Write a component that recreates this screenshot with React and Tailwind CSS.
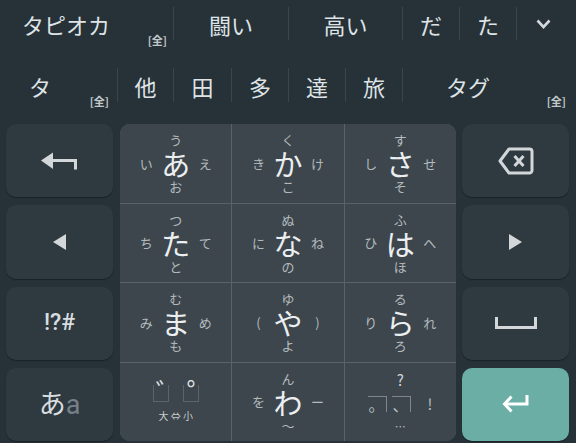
import React from "react";

const FONT = "font-['Noto_Sans_CJK_JP','Noto_Sans',sans-serif]";

const Sep = ({ className = "" }) => <div className={`w-px bg-[#3a464d] ${className}`} />;

const Zen = ({ className = "" }) => (
    <span className={`text-[11px] leading-[13px] font-bold text-[#c3c8cb] ${className}`}>[全]</span>
);

// one flick key of the 12-key pad
const Flick = ({ top, left, main, right, bottom }) => (
    <div className="flex flex-col items-center justify-center bg-[#3d464d]">
        <span className="text-[13px] leading-[15px] text-[#b3babe]">{top}</span>
        <div className="flex items-center my-[1px]">
            <span className="w-[14px] text-center text-[13px] leading-[15px] text-[#b3babe]">{left}</span>
            <span className="mx-[8px] text-[29px] leading-[30px] font-normal text-[#eceff1]">{main}</span>
            <span className="w-[14px] text-center text-[13px] leading-[15px] text-[#b3babe]">{right}</span>
        </div>
        <span className="text-[13px] leading-[15px] text-[#b3babe]">{bottom}</span>
    </div>
);

const SideKey = ({ children, className = "bg-[#2f3a40]" }) => (
    <div className={`flex-1 flex items-center justify-center rounded-[10px] shadow-[0_1px_1px_rgba(0,0,0,0.35)] ${className}`}>
        {children}
    </div>
);

const App = () => {
    return (
        <div className={`w-[576px] h-[443px] bg-[#263238] overflow-hidden ${FONT}`}>

            {/* candidate row 1 */}
            <div className="flex h-[48px] text-[22px] text-[#dfe3e6]">
                <div className="w-[173px] flex items-center">
                    <span className="ml-[22px] leading-none">タピオカ</span>
                    <Zen className="ml-auto mr-[6px] self-end mb-[1px]" />
                </div>
                <Sep className="my-[7px] mb-[8px]" />
                <div className="w-[114px] flex items-center justify-center">闘い</div>
                <Sep className="my-[7px] mb-[8px]" />
                <div className="w-[113px] flex items-center justify-center">高い</div>
                <Sep className="my-[7px] mb-[8px]" />
                <div className="w-[56px] flex items-center justify-center">だ</div>
                <Sep className="my-[7px] mb-[8px]" />
                <div className="w-[56px] flex items-center justify-center">た</div>
                <Sep className="my-[7px] mb-[8px]" />
                <div className="flex-1 flex items-center justify-center pr-[6px]">
                    <svg width="15" height="10" viewBox="0 0 15 10">
                        <polyline points="1.5,1.5 7.5,8 13.5,1.5" fill="none" stroke="#d3d7da" strokeWidth="2.6" />
                    </svg>
                </div>
            </div>

            {/* candidate row 2 */}
            <div className="flex h-[76px] text-[22px] text-[#dfe3e6]">
                <div className="w-[117px] flex items-center">
                    <span className="ml-[29px] leading-none">タ</span>
                    <Zen className="ml-auto mr-[8px] self-end mb-[16px]" />
                </div>
                <Sep className="mt-[20px] mb-[22px]" />
                <div className="w-[55px] flex items-center justify-center">他</div>
                <Sep className="mt-[20px] mb-[22px]" />
                <div className="w-[57px] flex items-center justify-center">田</div>
                <Sep className="mt-[20px] mb-[22px]" />
                <div className="w-[56px] flex items-center justify-center">多</div>
                <Sep className="mt-[20px] mb-[22px]" />
                <div className="w-[56px] flex items-center justify-center">達</div>
                <Sep className="mt-[20px] mb-[22px]" />
                <div className="w-[56px] flex items-center justify-center">旅</div>
                <Sep className="mt-[20px] mb-[22px]" />
                <div className="flex-1 flex items-center">
                    <span className="ml-[43px] leading-none">タグ</span>
                    <Zen className="ml-auto mr-[10px] self-end mb-[16px]" />
                </div>
            </div>

            {/* keyboard */}
            <div className="flex h-[317px] px-[6px]">

                {/* left column */}
                <div className="w-[107px] flex flex-col gap-[8px]">
                    <SideKey>
                        <svg width="37" height="18" viewBox="0 0 37 18">
                            <polygon points="0,8.5 12,0.5 12,17" fill="#d3d7da" />
                            <path d="M11 8.5 H34.5 V17.5" fill="none" stroke="#d3d7da" strokeWidth="3" />
                        </svg>
                    </SideKey>
                    <SideKey>
                        <svg width="14" height="16" viewBox="0 0 14 16">
                            <polygon points="0,8 13,0 13,16" fill="#d3d7da" />
                        </svg>
                    </SideKey>
                    <SideKey>
                        <span className="text-[23px] font-medium text-[#d9dde0] font-['Roboto',sans-serif]">!?#</span>
                    </SideKey>
                    <SideKey>
                        <span className="text-[27px] leading-none text-[#d9dde0]">
                            あ<span className="text-[#75808a] font-['Roboto',sans-serif]">a</span>
                        </span>
                    </SideKey>
                </div>

                {/* flick pad */}
                <div className="w-[336px] ml-[7px] grid grid-cols-3 grid-rows-4 gap-px bg-[#59626a] rounded-[10px] overflow-hidden">
                    <Flick top="う" left="い" main="あ" right="え" bottom="お" />
                    <Flick top="く" left="き" main="か" right="け" bottom="こ" />
                    <Flick top="す" left="し" main="さ" right="せ" bottom="そ" />
                    <Flick top="つ" left="ち" main="た" right="て" bottom="と" />
                    <Flick top="ぬ" left="に" main="な" right="ね" bottom="の" />
                    <Flick top="ふ" left="ひ" main="は" right="へ" bottom="ほ" />
                    <Flick top="む" left="み" main="ま" right="め" bottom="も" />
                    <Flick top="ゆ" left="(" main="や" right=")" bottom="よ" />
                    <Flick top="る" left="り" main="ら" right="れ" bottom="ろ" />

                    {/* dakuten / small kana */}
                    <div className="flex flex-col items-center justify-center bg-[#3d464d]">
                        <div className="flex gap-[14px] pt-[4px]">
                            <div className="relative w-[16px] h-[17px] border-l border-b border-r border-[#5b646b]">
                                <span className="absolute -top-[7px] -right-[14px] text-[26px] leading-[26px] text-[#dde1e3]">゛</span>
                            </div>
                            <div className="relative w-[16px] h-[17px] border-l border-b border-r border-[#5b646b]">
                                <span className="absolute -top-[8px] -right-[19px] text-[30px] leading-[30px] text-[#dde1e3]">゜</span>
                            </div>
                        </div>
                        <span className="mt-[8px] text-[10px] leading-[12px] text-[#c9ced1]">大 ⇔ 小</span>
                    </div>

                    <Flick top="ん" left="を" main="わ" right="ー" bottom="〜" />

                    {/* punctuation */}
                    <div className="flex flex-col items-center justify-center bg-[#3d464d] text-[#b9c0c4]">
                        <span className="text-[15px] leading-[18px] text-[#d0d5d8]">?</span>
                        <div className="flex items-end mt-[6px]">
                            <div className="w-[19px] h-[16px] flex items-end border-t border-r border-[#7f878c] text-[16px] leading-[16px]">。</div>
                            <div className="ml-[5px] w-[19px] h-[16px] flex items-end border-t border-r border-[#7f878c] text-[16px] leading-[16px]">、</div>
                            <span className="ml-[16px] text-[15px] leading-[17px]">!</span>
                        </div>
                        <span className="mt-[8px] text-[11px] leading-[12px]">…</span>
                    </div>
                </div>

                {/* right column */}
                <div className="w-[107px] ml-[6px] flex flex-col gap-[8px]">
                    <SideKey>
                        <svg width="36" height="28" viewBox="0 0 36 28">
                            <path d="M11 2 H31.5 A2.5 2.5 0 0 1 34 4.5 V23.5 A2.5 2.5 0 0 1 31.5 26 H11 L2 14 Z" fill="none" stroke="#d3d7da" strokeWidth="3" strokeLinejoin="round" />
                            <path d="M16.5 9 L25.5 19 M25.5 9 L16.5 19" stroke="#d3d7da" strokeWidth="3" />
                        </svg>
                    </SideKey>
                    <SideKey>
                        <svg width="14" height="16" viewBox="0 0 14 16">
                            <polygon points="0,0 13,8 0,16" fill="#d3d7da" />
                        </svg>
                    </SideKey>
                    <SideKey>
                        <svg width="42" height="13" viewBox="0 0 42 13">
                            <path d="M1.5 0 V10.5 H40.5 V0" fill="none" stroke="#d3d7da" strokeWidth="3" />
                        </svg>
                    </SideKey>
                    <SideKey className="bg-[#6aaea6]">
                        <svg width="27" height="18" viewBox="0 0 27 18">
                            <polyline points="9.5,1.5 2.5,9 9.5,16.5" fill="none" stroke="#ffffff" strokeWidth="3" />
                            <path d="M3 9 H25 V0" fill="none" stroke="#ffffff" strokeWidth="3" />
                        </svg>
                    </SideKey>
                </div>
            </div>
        </div>
    );
};

export default App;
